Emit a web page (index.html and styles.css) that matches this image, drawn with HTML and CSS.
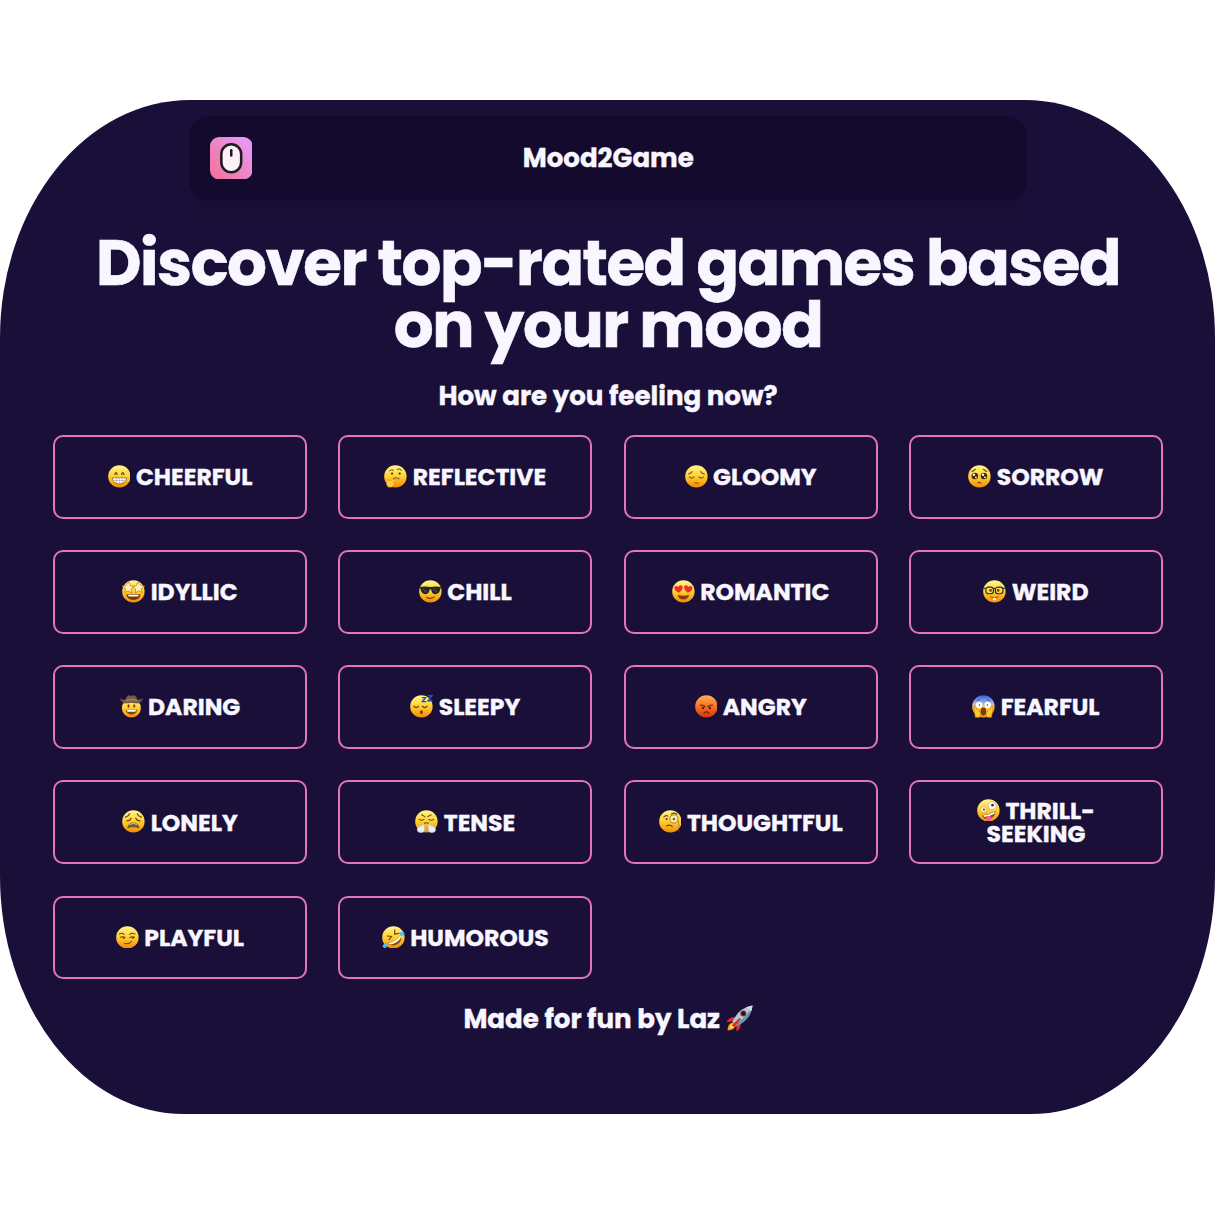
FILE: index.html
```html
<!DOCTYPE html>
<html lang="en">
<head>
<meta charset="utf-8">
<title>Mood2Game</title>
<link rel="stylesheet" href="styles.css">
</head>
<body>
<svg class="defs" width="0" height="0" aria-hidden="true">
  <defs>
    <linearGradient id="skin" x1="0" y1="0" x2="0" y2="1"><stop offset="0" stop-color="#fff68c"/><stop offset=".5" stop-color="#ffd033"/><stop offset="1" stop-color="#f18a05"/></linearGradient>
    <linearGradient id="rage" x1="0" y1="0" x2="0" y2="1"><stop offset="0" stop-color="#ffad55"/><stop offset=".5" stop-color="#f87324"/><stop offset="1" stop-color="#dc3208"/></linearGradient>
    <linearGradient id="fear" x1="0" y1="0" x2="0" y2="1"><stop offset="0" stop-color="#315fdc"/><stop offset=".38" stop-color="#a7bbe7"/><stop offset=".55" stop-color="#ffd43a"/><stop offset="1" stop-color="#f39b12"/></linearGradient>
    <linearGradient id="logo" x1="0" y1="1" x2="1" y2="0"><stop offset="0" stop-color="#f37094"/><stop offset="1" stop-color="#e79cff"/></linearGradient>
    <circle id="face" cx="12" cy="12" r="11.8" fill="url(#skin)"/>
  </defs>
</svg>
<main class="page">
  <header class="topbar">
    <svg class="logo" viewBox="0 0 42 42"><rect width="42" height="42" rx="9" fill="url(#logo)"/><rect x="11.2" y="7.2" width="19.6" height="27.6" rx="9.800" fill="#fdf1f9" stroke="#1d1b1c" stroke-width="2.500"/><path d="M21 13v5.200" stroke="#1d1b1c" stroke-width="2.500" stroke-linecap="round"/></svg>
    <span class="brand">Mood2Game</span>
  </header>
  <h1 class="title">Discover top-rated games based<br>on your mood</h1>
  <h2 class="question">How are you feeling now?</h2>
  <section class="moods">
    <button class="mood"><svg class="emoji" viewBox="0 0 24 24"><use href="#face"/><path d="M7.200 10q1.200-4 2.500 0M14.300 10q1.200-4 2.500 0" fill="none" stroke="#70400b" stroke-width="1.300" stroke-linecap="round"/><path d="M4.500 13.500h15q-1 6.300-7.500 6.300t-7.500-6.300z" fill="#fff" stroke="#956321" stroke-width=".8"/><path d="M5.500 16.300h13M9 14v5M12 14v5.500M15 14v5" stroke="#9c9791" stroke-width=".6"/></svg>CHEERFUL</button>
    <button class="mood"><svg class="emoji" viewBox="0 0 24 24"><use href="#face"/><path d="M6 6q2-2 4-.5M14 4.500q2.500-1.500 4.500 1M10 14q4-1.500 6 .5" fill="none" stroke="#70400b" stroke-width="1" stroke-linecap="round"/><circle cx="8.500" cy="9" r="1.200" fill="#54300b"/><circle cx="16.500" cy="9" r="1.200" fill="#54300b"/><path d="M4 23q-2.500-3-.7-7.500 1.200-1 2 1l6.500-1.500q2 0 1 1.600l-3.500 1.300q2.500.5 1 3.500-1.800 3-6.300 1.600z" fill="#ffcf4a" stroke="#d98a15" stroke-width=".6"/></svg>REFLECTIVE</button>
    <button class="mood"><svg class="emoji" viewBox="0 0 24 24"><use href="#face"/><path d="M3.500 9.500q2.500-.3 4-2.500M20.500 9.500q-2.500-.3-4-2.500M4.500 12.500q2.500 2.600 5 0M14.500 12.500q2.500 2.600 5 0M10 19h4" fill="none" stroke="#81500e" stroke-width="1.100" stroke-linecap="round"/></svg>GLOOMY</button>
    <button class="mood"><svg class="emoji" viewBox="0 0 24 24"><use href="#face"/><path d="M4 6.800q2-.5 3.500-2.300M20 6.800q-2-.5-3.500-2.300M10.500 18.800q1.500-1.300 3 0" fill="none" stroke="#70400b" stroke-width="1.200" stroke-linecap="round"/><circle cx="7.200" cy="11.500" r="3.400" fill="#432711"/><circle cx="16.800" cy="11.500" r="3.400" fill="#432711"/><g fill="#fff"><circle cx="6.200" cy="10.200" r="1.300"/><circle cx="15.800" cy="10.200" r="1.300"/><circle cx="8.300" cy="13" r="1"/><circle cx="17.900" cy="13" r="1"/></g></svg>SORROW</button>

    <button class="mood"><svg class="emoji" viewBox="0 0 24 24"><use href="#face"/><path d="M4.500 15h15q-1 6-7.500 6t-7.500-6z" fill="#703d10"/><path d="M6 15.500h12l-1.300 2H7.300z" fill="#fff"/><g fill="#fff3b5" stroke="#b96f08" stroke-width=".7"><path d="M7.300 2l1.500 4 4 .8-3.200 2.700.5 4.200-3.600-2.300-3.700 1.800 1-4L-.3 6.500l4.200-.4z"/><path d="M16.700 2l-1.500 4-4 .8 3.200 2.700-.5 4.200 3.600-2.300 3.700 1.800-1-4 4.100-2.700-4.200-.4z"/></g></svg>IDYLLIC</button>
    <button class="mood"><svg class="emoji" viewBox="0 0 24 24"><use href="#face"/><path d="M.5 7.500q6-1.300 11.500 0 5.500-1.300 11.500 0l-1 1.800q-.8 5.700-5.200 5.700-3.800 0-4.500-5h-1.600q-.7 5-4.500 5-4.400 0-5.200-5.700z" fill="#24272a"/><path d="M4 9l4 4M15 9l4 4" stroke="#626869" stroke-width="1"/><path d="M8 18.500q4 2 8-.5" fill="none" stroke="#70400b" stroke-width="1.200" stroke-linecap="round"/></svg>CHILL</button>
    <button class="mood"><svg class="emoji" viewBox="0 0 24 24"><use href="#face"/><g fill="#ed2b31"><path d="M7.500 13.500Q2 11 2.500 7.800q1.300-2.600 4-.5Q8.500 4.500 11 6.300q1.200 3-3.500 7.200z"/><path d="M16.500 13.500Q22 11 21.500 7.800q-1.300-2.600-4-.5Q15.500 4.500 13 6.300q-1.200 3 3.500 7.200z"/></g><path d="M6 15.500q6 2 12 0-1 5-6 5t-6-5z" fill="#804106"/></svg>ROMANTIC</button>
    <button class="mood"><svg class="emoji" viewBox="0 0 24 24"><use href="#face"/><g fill="#ffdc5a" fill-opacity=".7" stroke="#263037" stroke-width="1.200"><rect x="3" y="7.500" width="8" height="7" rx="2.800"/><rect x="13" y="7.500" width="8" height="7" rx="2.800"/><path d="M11 9.300q1-1 2 0M.8 8.500L3 9M23.200 8.500L21 9" fill="none"/></g><circle cx="8" cy="11" r="1.400" fill="#6d3f0b"/><circle cx="16" cy="11" r="1.400" fill="#6d3f0b"/><path d="M7.500 17.500q4.500 3 9 0" fill="none" stroke="#8b500b"/><path d="M10.500 19h3v2.300h-3z" fill="#fff"/></svg>WEIRD</button>

    <button class="mood"><svg class="emoji" viewBox="0 0 24 24"><circle cx="12" cy="13.800" r="10" fill="url(#skin)"/><path d="M0 3.500Q1 8.300 6 8.500q6-1.400 12 0 5-.2 6-5-2.500 2-5.500 1.600Q16.500.2 14.500.2L12 1 9.500.2Q7.500.2 5.500 5.100 2.500 5.500 0 3.500z" fill="#7b6047" stroke="#443830" stroke-width=".6"/><path d="M6 5.800q6-2 12 0" fill="none" stroke="#b09272"/><ellipse cx="9" cy="11.500" rx="1.100" ry="1.800" fill="#70400b"/><ellipse cx="15" cy="11.500" rx="1.100" ry="1.800" fill="#70400b"/><path d="M6 15.500h12q-1 5-6 5t-6-5z" fill="#784414"/><path d="M7 15.800h10l-1 1.800H8z" fill="#fff"/></svg>DARING</button>
    <button class="mood"><svg class="emoji" viewBox="0 0 24 24"><use href="#face"/><path d="M4 11.800q2.500 2.800 5 0M13 11.800q2.500 2.800 5 0" fill="none" stroke="#70400b" stroke-width="1.300" stroke-linecap="round"/><ellipse cx="12" cy="18" rx="1.600" ry="2" fill="#70400b"/><path d="M12.500 2.800h3.800L13 7h4M18.500.8H23L19 6h4.500" fill="none" stroke="#1e55bd" stroke-width="1.500"/></svg>SLEEPY</button>
    <button class="mood"><svg class="emoji" viewBox="0 0 24 24"><circle cx="12" cy="12" r="11.800" fill="url(#rage)"/><path d="M5.500 10.500q4 .3 5 2M18.500 10.500q-4 .3-5 2M9.500 19q2.500-2.300 5 0" fill="none" stroke="#641d0d" stroke-width="1.200" stroke-linecap="round"/><circle cx="8.300" cy="13.800" r="1.300" fill="#641d0d"/><circle cx="15.700" cy="13.800" r="1.300" fill="#641d0d"/></svg>ANGRY</button>
    <button class="mood"><svg class="emoji" viewBox="0 0 24 24"><circle cx="12" cy="12" r="11.800" fill="url(#fear)"/><path d="M5.500 6l3-1.500M18.500 6l-3-1.500" stroke="#34539d"/><circle cx="7.500" cy="10.500" r="3.300" fill="#fff"/><circle cx="16.500" cy="10.500" r="3.300" fill="#fff"/><circle cx="7.800" cy="10.500" r=".7" fill="#442918"/><circle cx="16.200" cy="10.500" r=".7" fill="#442918"/><ellipse cx="12" cy="17.500" rx="3" ry="4.300" fill="#713f10"/><path d="M1.500 12q2-.5 3 2l4 4q1.500 2-.5 5.500H3.500zM22.500 12q-2-.5-3 2l-4 4q-1.500 2 .5 5.500h4.500z" fill="#ffca30" stroke="#ca780a" stroke-width=".7"/></svg>FEARFUL</button>

    <button class="mood"><svg class="emoji" viewBox="0 0 24 24"><use href="#face"/><path d="M3.500 7.500q3.500-.8 4.500-3.500M20.500 7.500q-3.500-.8-4.500-3.500M5 11.500q3.500 0 4.500-3M19 11.500q-3.500 0-4.500-3" fill="none" stroke="#70400b" stroke-width="1.200" stroke-linecap="round"/><path d="M5.500 19.500q1-6.300 6.500-6.300t6.500 6.300q-6.500-2.500-13 0z" fill="#7b5930"/><path d="M8 15.200q4-2 8 0" stroke="#e8e2db" stroke-width=".9" fill="none"/></svg>LONELY</button>
    <button class="mood"><svg class="emoji" viewBox="0 0 24 24"><use href="#face"/><path d="M7 5l3.500 2M17 5l-3.500 2M4.500 9.800q2.500 2 5 0M14.500 9.800q2.500 2 5 0M10 14q2-1 4 0" fill="none" stroke="#70400b" stroke-width="1.100" stroke-linecap="round"/><path d="M9.500 15.500q-2-.8-3 1.700-4-.2-4.200 3.300Q2.500 24 6 23.700q4 .3 4-3.500zM14.500 15.500q2-.8 3 1.700 4-.2 4.200 3.300-.2 3.500-3.700 3.200-4 .3-4-3.500z" fill="#e4eff9" stroke="#b4cada" stroke-width=".6"/></svg>TENSE</button>
    <button class="mood"><svg class="emoji" viewBox="0 0 24 24"><use href="#face"/><path d="M5 7.500q2-2.500 4.500-1M13 4.500q3-2.500 6 0M8 16.500q4-1.500 6 1" fill="none" stroke="#70400b" stroke-width="1.100" stroke-linecap="round"/><circle cx="8" cy="9.500" r="1.200" fill="#70400b"/><circle cx="15.700" cy="9.500" r="4.300" fill="#f9e9a4" stroke="#a38345" stroke-width="1"/><circle cx="15.700" cy="9.500" r="1.200" fill="#70400b"/><path d="M20 11q1.500 5 1 12" fill="none" stroke="#6b5538" stroke-width=".5"/></svg>THOUGHTFUL</button>
    <button class="mood mood-wrap"><span class="line"><svg class="emoji" viewBox="0 0 24 24"><use href="#face"/><circle cx="16" cy="7" r="4.200" fill="#fff" stroke="#b7904a" stroke-width=".5"/><circle cx="7" cy="11" r="2.800" fill="#fff" stroke="#b7904a" stroke-width=".5"/><circle cx="16.300" cy="6.500" r="1.400" fill="#44301b"/><circle cx="7.300" cy="11" r="1.100" fill="#44301b"/><path d="M5.500 17q7.500 0 14-4.500-.2 7-7 8.500-5.500.5-7-4z" fill="#7b4515"/><path d="M6.500 17q6.500 0 12.300-3.800l-.5 2.300q-4.800 3.200-10.800 3.400z" fill="#fff"/><path d="M9.500 19l5-1.500q1.500 5.500-1.700 6-3.300.2-3.300-4.500z" fill="#f85b9b"/></svg>THRILL-</span>SEEKING</button>

    <button class="mood"><svg class="emoji" viewBox="0 0 24 24"><use href="#face"/><path d="M3.500 8.500q2.500-2 5 .3M14.500 8.800q2.500-2.300 5.500-.3M4.500 11.800q2.500-1.300 5 .3M14.500 12.100q2.500-1.600 5-.3M9 18.500q5 .8 7.500-2.500" fill="none" stroke="#70400b" stroke-width="1.100" stroke-linecap="round"/><circle cx="8" cy="12.500" r="1.100" fill="#70400b"/><circle cx="17.800" cy="12.500" r="1.100" fill="#70400b"/></svg>PLAYFUL</button>
    <button class="mood"><svg class="emoji" viewBox="0 0 24 24"><use href="#face"/><path d="M5.500 10.500l4.500.5-2.500 3.500M13.500 4l-.3 4.500 4.500-.7" fill="none" stroke="#70400b" stroke-width="1.200" stroke-linecap="round"/><path d="M6.500 18.300Q15 16.500 19.500 9q2.500 6-2.500 9.800-5.500 3.500-10.500-.5z" fill="#8b500f"/><path d="M7 18.200Q15 16.500 19.500 9.500l.5 2.500Q16 18.500 8.500 19.400z" fill="#fff"/><path d="M17.500 7.500q3.500-2.300 6-.3.500 3-2 3-2.500-.2-4-2.700zM6.500 17q.5 4-2.500 6-3 .5-3.500-2 .7-2.500 6-4z" fill="#53bdf0"/></svg>HUMOROUS</button>
  </section>
  <footer class="credit">Made for fun by Laz
    <svg class="rocket" viewBox="0 0 27 27"><path d="M9 12.500q-5-1-8.500 4.500l7.500-.5zM14.500 18q1 5-4 8.500l-.2-7z" fill="#ea2c1b"/><path d="M7 17.500Q1.500 18 1.500 25.500 9 25 10 20z" fill="#f99716"/><path d="M7.500 18.500Q4 19 3.500 23.500 8 23 9 20z" fill="#ffed68"/><path d="M6.500 17Q12 3 26.500.5 25 14.500 10.500 21z" fill="#b4c8d4"/><path d="M8.500 19Q20 14 26.500.5 25 14.500 10.500 21z" fill="#6895b4"/><path d="M20.500 2.300q3-1.400 6-1.800-.3 3-1.500 6z" fill="#d3dce1"/><circle cx="17.300" cy="8.500" r="3" fill="#b71920"/><circle cx="17.300" cy="8.500" r="1.900" fill="#25191f"/><path d="M5.500 20.500l8-7.500 1.500 1-7 8z" fill="#e3241a"/></svg>
  </footer>
</main>
</body>
</html>
```
FILE: styles.css
```css
* { box-sizing: border-box; }
body {
  margin: 0;
  padding-top: 99.5px;
  background: #fff;
  color: #f8f7ff;
  font-family: Poppins, Inter, sans-serif;
  font-weight: 700;
  -webkit-text-stroke: 0.35px #f8f7ff;
}
.defs { position: absolute; }
.page {
  height: 1014.800px;
  padding: 16.500px 52px 0 53px;
  background: #190f39;
  border-radius: 190px 190px 184px 184px / 238px;
  text-align: center;
}
.topbar {
  display: grid;
  grid-template-columns: 42.500px 1fr 42.500px;
  align-items: center;
  width: 837.500px;
  height: 83.500px;
  margin: 0 auto;
  padding: 0 20px 0 20.500px;
  background: #130a2d;
  border-radius: 20px;
  box-shadow: 0 16px 0 -5px #180e36;
}
.logo { display: block; width: 42.500px; height: 42.500px; }
.brand { font-size: 26.100px; line-height: 32px; }
.title {
  margin: 32px 0 0;
  font-size: 62.700px;
  line-height: 62.700px;
  letter-spacing: -0.0235em;
  white-space: nowrap;
  -webkit-text-stroke-width: 0.6px;
}
.question { margin: 23.500px 0 0; font-size: 26.100px; line-height: 32px; }
.moods {
  display: grid;
  grid-template-columns: repeat(4, 254px);
  grid-auto-rows: 83.700px;
  justify-content: space-between;
  row-gap: 31.500px;
  margin-top: 22.500px;
}
.mood {
  display: flex;
  align-items: center;
  justify-content: center;
  gap: 5.500px;
  padding: 0;
  background: transparent;
  border: 2px solid #e673bd;
  border-radius: 10px;
  color: inherit;
  font: 700 23.500px/23.500px Poppins, Inter, sans-serif;
  white-space: nowrap;
  -webkit-text-stroke: 0.35px #f8f7ff;
}
.mood-wrap { flex-direction: column; gap: 0; }
.line { display: flex; align-items: center; gap: 5.500px; height: 23.500px; }
.emoji { flex: none; width: 22.800px; height: 22.800px; margin-bottom: 1px; }
.credit {
  display: flex;
  align-items: center;
  justify-content: center;
  gap: 5.500px;
  height: 32px;
  margin-top: 23.200px;
  font-size: 26.100px;
  line-height: 32px;
}
.rocket { width: 27px; height: 27px; }
```
